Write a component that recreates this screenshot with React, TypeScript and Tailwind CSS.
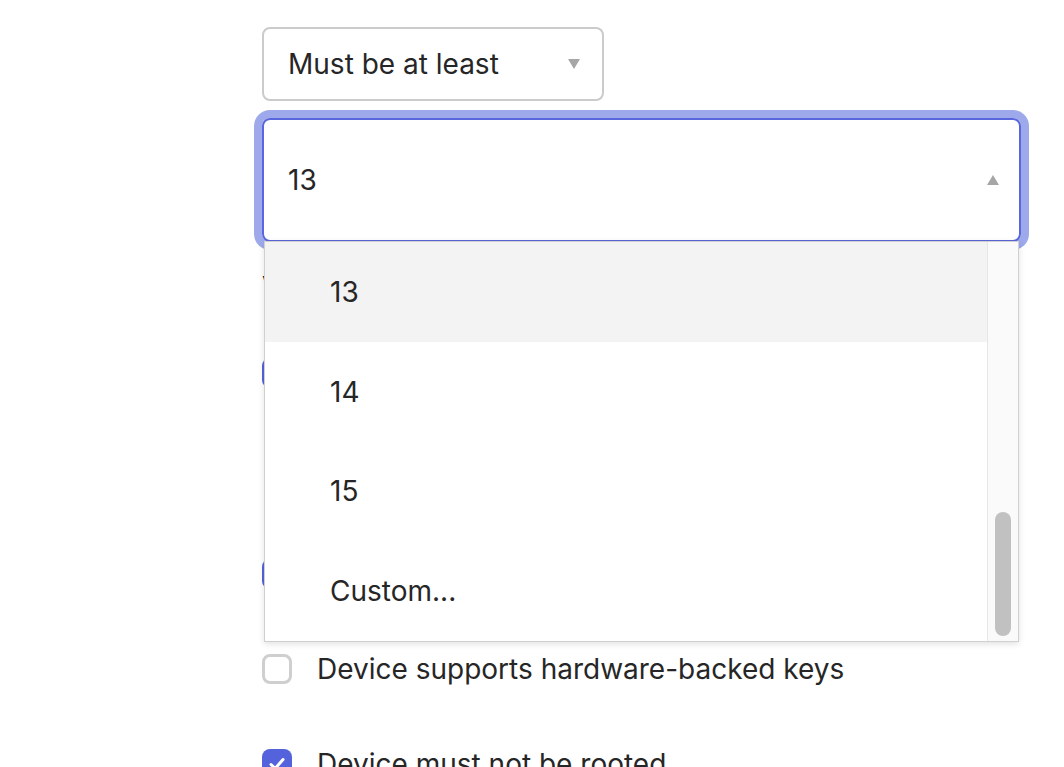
import { useState } from "react";

const options = ["13", "14", "15", "Custom..."];

const Caret = ({ up }: { up?: boolean }) => (
  <svg width="12" height="10" viewBox="0 0 12 10" className="shrink-0">
    <path d={up ? "M6 0 L12 10 L0 10 Z" : "M0 0 L12 0 L6 10 Z"} fill="#a6a6a6" />
  </svg>
);

const Checkbox = ({ checked }: { checked?: boolean }) =>
  checked ? (
    <div className="w-[30px] h-[30px] rounded-[8px] bg-[#5462dc] flex items-center justify-center shrink-0">
      <svg width="20" height="20" viewBox="0 0 20 20">
        <path d="M4 10.5 L8.2 14.5 L16 5.5" stroke="white" strokeWidth="3" fill="none" strokeLinecap="round" strokeLinejoin="round" />
      </svg>
    </div>
  ) : (
    <div className="w-[30px] h-[30px] rounded-[8px] border-[3px] border-[#cfcfcf] bg-white shrink-0" />
  );

const CheckRow = ({ label, checked }: { label: string; checked?: boolean }) => (
  <div className="flex items-center gap-[25px] h-[30px]">
    <Checkbox checked={checked} />
    <span className="text-[28px] text-[#262626] whitespace-nowrap">{label}</span>
  </div>
);

export default function App() {
  const [value] = useState("13");
  const [hover] = useState("13");

  return (
    <div className="w-[1064px] h-[767px] overflow-hidden bg-white text-[#262626] font-['Inter','Liberation_Sans',sans-serif]">
      <div className="pl-[262px] pt-[27px] w-[1021px] flex flex-col">
        <div className="w-[342px] h-[74px] border-2 border-[#cbcbcb] rounded-[8px] flex items-center justify-between pl-[24px] pr-[22px]">
          <span className="text-[28px]">Must be at least</span>
          <Caret />
        </div>

        <div className="relative mt-[17px]">
          <div className="h-[124px] border-2 border-[#5a66db] rounded-[8px] ring-[8px] ring-[#9ea9eb] flex items-center justify-between pl-[24px] pr-[20px]">
            <span className="text-[28px]">{value}</span>
            <Caret up />
          </div>

          <div className="pt-[24px] text-[28px] whitespace-nowrap">Version must be at least 13</div>

          <div className="flex flex-col gap-[65px] pt-[50px]">
            <div className="flex flex-col gap-[20px]">
              <CheckRow label="Require screen lock" checked />
              <div className="pl-[55px] text-[22px] text-[#777]">Device must have a PIN, pattern or password set</div>
              <div className="pl-[55px] text-[22px] text-[#777]">Applies to all managed devices</div>
            </div>
            <CheckRow label="Require disk encryption" checked />
            <CheckRow label="Device supports hardware-backed keys" />
            <CheckRow label="Device must not be rooted" checked />
          </div>

          <div className="absolute left-[2px] top-[123px] w-[755px] h-[401px] bg-white border border-[#d0d0d0] shadow-[0_2px_6px_rgba(0,0,0,0.12)] flex">
            <div className="flex-1 flex flex-col">
              {options.map((o) => (
                <div
                  key={o}
                  className={`h-[100px] flex items-center pl-[65px] text-[28px] ${o === hover ? "bg-[#f3f3f3]" : "bg-white"}`}
                >
                  {o}
                </div>
              ))}
            </div>
            <div className="w-[31px] bg-[#fafafa] border-l border-[#e6e6e6] flex flex-col justify-end items-center pb-[5px]">
              <div className="w-[16px] h-[124px] rounded-full bg-[#c1c1c1]" />
            </div>
          </div>
        </div>
      </div>
    </div>
  );
}
